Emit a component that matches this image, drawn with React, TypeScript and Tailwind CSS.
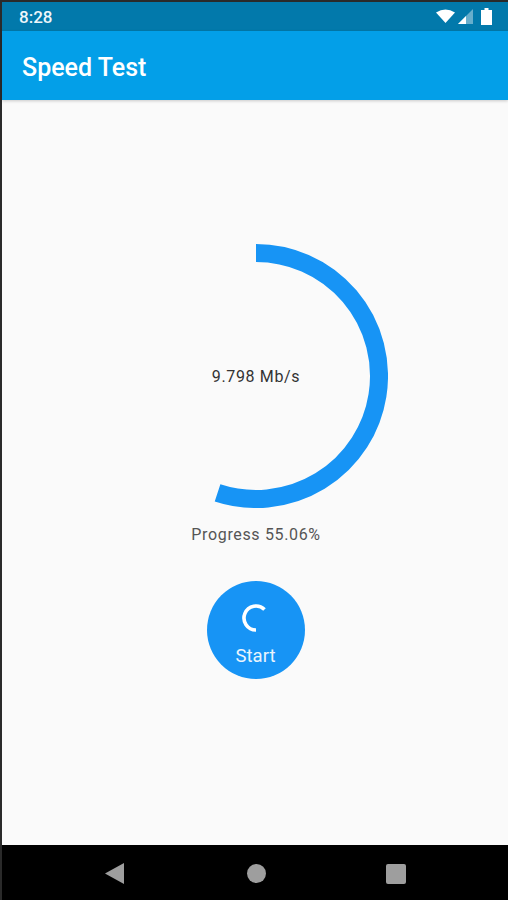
import { useState } from 'react';

const RING_RADIUS = 123;

// Point on a circle, measured clockwise from 12 o'clock
function polar(cx: number, cy: number, r: number, deg: number) {
  const rad = (deg * Math.PI) / 180;
  return { x: cx + r * Math.sin(rad), y: cy - r * Math.cos(rad) };
}

function ProgressRing({ percent }: { percent: number }) {
  const end = polar(132, 132, RING_RADIUS, (percent / 100) * 360);
  const largeArc = percent > 50 ? 1 : 0;

  return (
    <svg width="264" height="264" viewBox="0 0 264 264" className="block">
      <path
        d={`M 132 9 A ${RING_RADIUS} ${RING_RADIUS} 0 ${largeArc} 1 ${end.x} ${end.y}`}
        fill="none"
        stroke="#1794f5"
        strokeWidth="18"
      />
    </svg>
  );
}

function StatusIcons() {
  return (
    <div className="flex items-center">
      {/* Wifi */}
      <svg width="19" height="14" viewBox="0 0 19 14" className="mb-[2px] mr-[3px]">
        <path d="M0 3.5 Q9.5 -2.5 19 3.5 L9.5 14 Z" fill="#ffffff" />
      </svg>
      {/* Signal */}
      <svg width="15" height="15" viewBox="0 0 15 15" className="mr-[8px]">
        <path d="M0 15 L15 0 V15 Z" fill="#ffffff" fillOpacity="0.4" />
        <path d="M0 15 L8 7 V15 Z" fill="#ffffff" />
      </svg>
      {/* Battery */}
      <svg width="11" height="17" viewBox="0 0 11 17" className="mr-[1px]">
        <path d="M3.5 0 H7.5 V2 H11 V17 H0 V2 H3.5 Z" fill="#ffffff" />
      </svg>
    </div>
  );
}

function NavBar() {
  return (
    <nav className="flex h-[55px] items-center justify-between bg-black pl-[103px] pr-[102px] pt-[2px]">
      <svg width="21" height="21" viewBox="0 0 21 21">
        <path d="M19 0 V21 L0 10.5 Z" fill="#9e9e9e" />
      </svg>
      <div className="h-[19px] w-[19px] rounded-full bg-[#9e9e9e]" />
      <div className="h-[20px] w-[20px] rounded-[2px] bg-[#9e9e9e]" />
    </nav>
  );
}

export default function App() {
  const [progress] = useState(55.06);

  return (
    <div className="flex h-[900px] w-[508px] flex-col bg-[#2a2a2a] pt-[2px] font-['Roboto',sans-serif]">
      <div className="flex flex-1 flex-col pl-[2px]">
        {/* Status bar */}
        <div className="flex h-[29px] items-center justify-between bg-[#0279ab] pl-[17px] pr-[15px]">
          <span className="pt-[3px] text-[17px] font-medium text-[#eef6fa]">8:28</span>
          <StatusIcons />
        </div>

        {/* App bar */}
        <header className="z-10 flex h-[69px] items-center bg-[#039fe8] pl-[20px] shadow-[0_1px_3px_rgba(0,0,0,0.2)]">
          <h1 className="pt-[5px] text-[25px] font-medium text-white">Speed Test</h1>
        </header>

        {/* Body */}
        <main className="flex flex-1 flex-col items-center bg-[#fafafa] pl-[2px] pt-[144px]">
          <div className="grid place-items-center">
            <div className="[grid-area:1/1]">
              <ProgressRing percent={progress} />
            </div>
            <span className="[grid-area:1/1] pt-[2px] text-[16px] tracking-[0.65px] text-[#333333]">9.798 Mb/s</span>
          </div>

          <p className="mt-[15px] pt-[1px] text-[16px] leading-[22px] tracking-[0.65px] text-[#555555]">
            Progress {progress}%
          </p>

          <button className="mt-[35px] flex h-[98px] w-[98px] flex-col items-center rounded-full bg-[#1794f5] pt-[21px] text-white">
            <svg width="30" height="32" viewBox="0 0 30 32">
              <path
                d="M23.5 7.5 A 12 12 0 1 0 15 28"
                fill="none"
                stroke="#ffffff"
                strokeWidth="3.6"
              />
            </svg>
            <span className="mr-[1px] mt-[12px] text-[18.5px] leading-[20px] text-[#eaf4fd]">Start</span>
          </button>
        </main>

        <NavBar />
      </div>
    </div>
  );
}
